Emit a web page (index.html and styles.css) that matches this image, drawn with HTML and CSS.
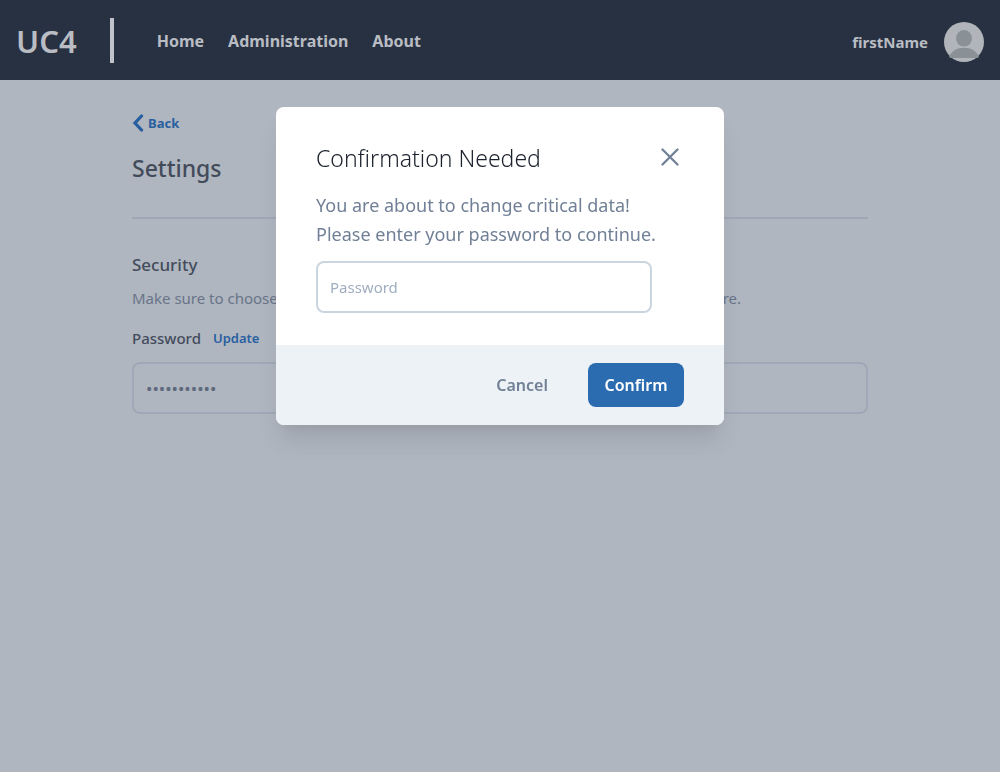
FILE: index.html
```html
<!DOCTYPE html>
<html lang="en">
<head>
<meta charset="utf-8">
<meta name="viewport" content="width=device-width, initial-scale=1">
<title>UC4 Settings</title>
<link rel="stylesheet" href="styles.css">
</head>
<body>
<header class="navbar">
  <a class="brand" href="#">UC4</a>
  <span class="divider"></span>
  <nav class="nav-links">
    <a href="#">Home</a>
    <a href="#">Administration</a>
    <a href="#">About</a>
  </nav>
  <a class="user" href="#">
    <span class="user-name">firstName</span>
    <svg class="avatar" viewBox="0 0 40 40" aria-hidden="true">
      <circle cx="20" cy="20" r="20" fill="#b1b5ba"/>
      <ellipse cx="20" cy="16.3" rx="8" ry="8.3" fill="#899197"/>
      <path d="M5 34.500C8 28.500 13 25.700 20 25.700S32 28.500 35 34.500Q34 36 33 36H7Q6 36 5 34.500Z" fill="#899197"/>
    </svg>
  </a>
</header>
<main class="page">
  <a class="back" href="#">
    <svg class="back-icon" viewBox="0 0 12 18" aria-hidden="true"><path d="M9.500 2 3 9l6.500 7" fill="none" stroke="#28609f" stroke-width="3.300" stroke-linecap="round" stroke-linejoin="miter"/></svg>
    Back
  </a>
  <h1 class="title">Settings</h1>
  <section class="security">
    <h2 class="section-title">Security</h2>
    <p class="description">Make sure to choose a secure password. You may update your existing password here.</p>
    <div class="label-row">
      <label for="current">Password</label>
      <button class="update" type="button">Update</button>
    </div>
    <input class="field field-muted" id="current" type="text" value="•••••••••••" readonly>
  </section>
</main>
<div class="overlay">
  <form class="dialog" role="dialog" aria-modal="true" aria-labelledby="dialog-title">
    <div class="dialog-body">
      <div class="dialog-head">
        <h2 class="dialog-title" id="dialog-title">Confirmation Needed</h2>
        <button class="close" type="button" aria-label="Close">
          <svg viewBox="0 0 18 18" aria-hidden="true"><path d="M1.500 1.500l15 15M16.500 1.500l-15 15" fill="none" stroke="#718096" stroke-width="2.300" stroke-linecap="round"/></svg>
        </button>
      </div>
      <label class="message" for="confirm">You are about to change critical data!<br>Please enter your password to continue.</label>
      <input class="field" id="confirm" type="password" placeholder="Password">
    </div>
    <div class="dialog-actions">
      <button class="cancel" type="button">Cancel</button>
      <button class="confirm" type="submit">Confirm</button>
    </div>
  </form>
</div>
</body>
</html>
```
FILE: styles.css
```css
* { box-sizing: border-box; }
body {
  margin: 0;
  min-height: 100vh;
  background: #afb6c0;
  color: #434b5b;
  font: 15px/24px "Segoe UI", "Noto Sans", sans-serif;
}
a { color: inherit; text-decoration: none; }
h1, h2, p { margin: 0; }
button { font: inherit; border: 0; padding: 0; background: none; cursor: pointer; }
.navbar {
  display: flex;
  align-items: center;
  height: 80px;
  padding: 0 16px;
  background: #283142;
  color: #b9bdc3;
  font-weight: 600;
}
.brand { padding-top: 2px; font-size: 31px; line-height: 40px; }
.divider { width: 4px; height: 45px; margin: 0 43px 0 33px; background: #c0c3c9; }
.nav-links { display: flex; gap: 24px; padding-top: 2px; font-size: 16px; font-weight: 700; }
.user { display: flex; align-items: center; gap: 16px; margin: 4px 0 0 auto; }
.user-name { font-weight: 700; }
.avatar { width: 40px; height: 40px; }
.page { max-width: 768px; margin: 0 auto; padding: 32px 16px; }
.back { display: flex; width: max-content; align-items: center; gap: 4px; color: #28609f; font-size: 13px; line-height: 22px; font-weight: 700; }
.back-icon { width: 12px; height: 18px; }
.title { padding: 18px 0 33px; border-bottom: 2px solid #a0a8b7; font-size: 23px; line-height: 32px; font-weight: 500; }
.security { display: flex; flex-direction: column; padding-top: 32px; }
.section-title { font-size: 17px; line-height: 28px; font-weight: 500; }
.description { margin-top: 7px; color: #697488; }
.label-row { display: flex; align-items: center; gap: 12px; margin: 16px 0 12px; font-weight: 500; }
.update { color: #28609f; font-size: 13px; font-weight: 600; }
.field {
  display: block;
  width: 100%;
  height: 52px;
  padding: 0 12px;
  border: 2px solid #cbd5e0;
  border-radius: 8px;
  background: transparent;
  color: #4a5568;
  font: inherit;
}
.field::placeholder { color: #a0aec0; opacity: 1; }
.field-muted { border-color: #a0a8b7; color: #5f697e; font-size: 17px; }
.overlay { position: fixed; inset: 0; padding: 107px 16px 16px; }
.dialog {
  max-width: 448px;
  margin: 0 auto;
  overflow: hidden;
  border-radius: 8px;
  background: #fff;
  box-shadow: 0 20px 25px -5px rgba(0, 0, 0, .1), 0 10px 10px -5px rgba(0, 0, 0, .04);
}
.dialog-body { padding: 32px 40px; }
.dialog-head { display: flex; align-items: center; justify-content: space-between; padding-right: 5px; }
.dialog-title { padding-top: 2px; color: #1a202c; font-size: 23px; line-height: 34px; font-weight: 300; }
.close { width: 18px; height: 18px; }
.close svg { display: block; }
.message { display: block; margin: 16px 0 12px; color: #718096; font-size: 18px; line-height: 29px; }
.dialog-body .field { width: 336px; max-width: 100%; }
.dialog-actions { display: flex; align-items: center; justify-content: flex-end; gap: 24px; padding: 18px 40px; background: #edf2f7; font-size: 16px; font-weight: 600; }
.cancel { padding: 10px 16px; color: #718096; }
.confirm { min-width: 96px; padding: 10px 16px; border-radius: 8px; background: #2b6cb0; color: #fff; }
```
